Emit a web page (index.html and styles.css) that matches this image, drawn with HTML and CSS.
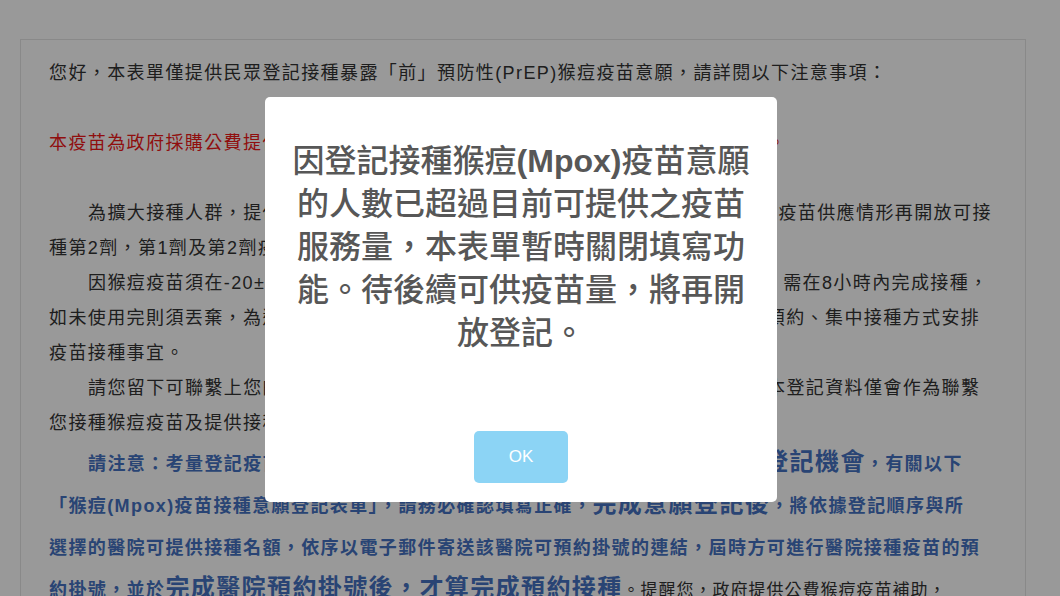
FILE: index.html
```html
<!DOCTYPE html>
<html lang="zh-Hant-TW">
<head>
<meta charset="utf-8">
<title>猴痘(Mpox)疫苗接種意願登記表單</title>
<link rel="stylesheet" href="styles.css">
</head>
<body>
<main class="card">
  <p class="intro">您好，本表單僅提供民眾登記接種暴露「前」預防性(PrEP)猴痘疫苗意願，請詳閱以下注意事項：</p>
  <p class="warn">本疫苗為政府採購公費提供，接種對象為經評估具感染高風險且符合接種條件之民眾。</p>
  <p class="para">為擴大接種人群，提供高風險族群及早保護，現階段先開放第1劑接種，後續將視疫苗供應情形再開放可接<br>種第2劑，第1劑及第2劑疫苗接種間隔至少4週。</p>
  <p class="para">因猴痘疫苗須在-20±5°C冷凍保存，解凍後於2-8°C冷藏保存30天，疫苗開瓶後，需在8小時內完成接種，<br>如未使用完則須丟棄，為避免疫苗浪費，將依各醫院疫苗配置量及民眾登記情形，以預約、集中接種方式安排<br>疫苗接種事宜。</p>
  <p class="para">請您留下可聯繫上您的電子郵件信箱及手機號碼，以利後續通知接種相關事宜，本登記資料僅會作為聯繫<br>您接種猴痘疫苗及提供接種相關資訊使用。</p>
  <p class="para notice">請注意：考量登記疫苗人數眾多，請民眾勿重複填寫此表單，<span class="big">以免影響您的登記機會</span>，有關以下<br>「猴痘(Mpox)疫苗接種意願登記表單」，請務必確認填寫正確，<span class="big">完成意願登記後</span>，將依據登記順序與所<br>選擇的醫院可提供接種名額，依序以電子郵件寄送該醫院可預約掛號的連結，屆時方可進行醫院接種疫苗的預<br>約掛號，並於<span class="big">完成醫院預約掛號後，才算完成預約接種</span><span class="plain">。提醒您，政府提供公費猴痘疫苗補助，</span></p>
</main>

<div class="overlay"></div>

<div class="alert" role="dialog">
  <h2 class="alert-title">因登記接種猴痘<b class="latin">(Mpox)</b>疫苗意願的人數已超過目前可提供之疫苗服務量，本表單暫時關閉填寫功能。待後續可供疫苗量，將再開放登記。</h2>
  <div class="alert-actions">
    <button class="alert-ok" type="button">OK</button>
  </div>
</div>
</body>
</html>
```

FILE: styles.css
```css
html, body {
  margin: 0;
  padding: 0;
  background: #ffffff;
  overflow: hidden;
  height: 100%;
}

body {
  font-family: "Liberation Sans", "Noto Sans CJK TC", sans-serif;
  color: #333333;
}

.card {
  box-sizing: border-box;
  margin: 39px 34px 0 20px;
  border: 1px solid #e4e4e4;
  padding: 16px 10px 40px 28px;
  font-size: 18px;
  letter-spacing: 1.4px;
  line-height: 35px;
}

.card p {
  margin: 0;
  white-space: nowrap;
}

.intro {
  margin-bottom: 35px !important;
}

.warn {
  color: #f01818;
  margin-bottom: 35px !important;
}

.para {
  text-indent: 39px;
}

.notice {
  color: #4572c2;
  font-weight: 700;
  line-height: 42px;
  margin-top: 2px !important;
}

.big {
  font-size: 24px;
  line-height: 1;
}

.plain {
  color: #333333;
  font-weight: 400;
  font-size: 17px;
  letter-spacing: 1px;
}

.overlay {
  position: fixed;
  inset: 0;
  background: rgba(0, 0, 0, 0.4);
}

.alert {
  position: fixed;
  top: 97px;
  left: 265px;
  width: 478px;
  padding: 17px;
  background: #ffffff;
  border-radius: 5px;
  text-align: center;
  font-family: "Liberation Sans", "Noto Sans CJK TC", sans-serif;
}

.alert-title {
  margin: 26px 0 0;
  font-size: 32px;
  line-height: 43px;
  font-weight: 500;
  color: #575757;
}

.alert-title .latin {
  font-weight: 700;
}

.alert-actions {
  margin-top: 76px;
  padding-bottom: 2px;
  display: flex;
  justify-content: center;
}

.alert-ok {
  width: 94px;
  height: 52px;
  border: 0;
  border-radius: 5px;
  background: #8cd4f5;
  color: #ffffff;
  font-family: "Liberation Sans", sans-serif;
  font-size: 17px;
  cursor: pointer;
}
```
